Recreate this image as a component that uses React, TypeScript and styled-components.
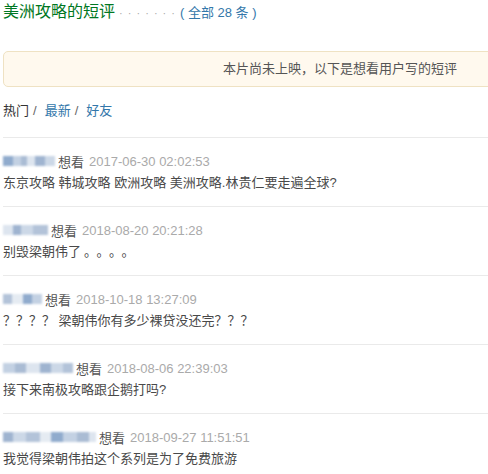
import React from "react";
import styled, { createGlobalStyle } from "styled-components";

const GlobalStyle = createGlobalStyle`
  body {
    margin: 0;
    background: #fff;
    overflow: hidden;
    font-family: "Liberation Sans", "Noto Sans CJK SC", sans-serif;
  }
`;

const Punct = styled.span`
  letter-spacing: 6px;
  margin-left: 3px;
`;

interface Comment {
  name: number[];
  time: string;
  text: React.ReactNode;
}

// widths of the blurred username patches
const comments: Comment[] = [
  { name: [10, 8, 6, 8, 10, 10], time: "2017-06-30 02:02:53", text: "东京攻略 韩城攻略 欧洲攻略 美洲攻略.林贵仁要走遍全球?" },
  { name: [10, 8, 12, 15], time: "2018-08-20 20:21:28", text: <>别毁梁朝伟了<Punct>。。。。</Punct></> },
  { name: [9, 11, 9, 10], time: "2018-10-18 13:27:09", text: "？？？？ 梁朝伟你有多少裸贷没还完？？？" },
  { name: [12, 11, 14, 11, 12, 10], time: "2018-08-06 22:39:03", text: "接下来南极攻略跟企鹅打吗?" },
  { name: [10, 13, 14, 11, 12, 14, 12, 7], time: "2018-09-27 11:51:51", text: "我觉得梁朝伟拍这个系列是为了免费旅游" },
];

const patchColors = ["#7d9cc4", "#b9c9de", "#9bb0cc", "#d7e0ec", "#8ea7c8", "#c3d1e3", "#a6b8d2", "#e1e7f0"];

export default function App(): React.ReactElement {
  return (
    <>
      <GlobalStyle />
      <Page>
        <Title>
          美洲攻略的短评
          <Dots>· · · · · · ·</Dots>
          <Count>( 全部 28 条 )</Count>
        </Title>
        <Notice>本片尚未上映，以下是想看用户写的短评</Notice>
        <Tabs>
          <Tab>热门</Tab>
          <Slash>/</Slash>
          <Tab $link>最新</Tab>
          <Slash>/</Slash>
          <Tab $link>好友</Tab>
        </Tabs>
        <List>
          {comments.map((c, i) => (
            <Item key={i}>
              <Header>
                <BlurName>
                  {c.name.map((w, j) => (
                    <Patch key={j} style={{ width: w, background: patchColors[(i * 3 + j) % patchColors.length] }} />
                  ))}
                </BlurName>
                <Status>想看</Status>
                <Time>{c.time}</Time>
              </Header>
              <Text>{c.text}</Text>
            </Item>
          ))}
        </List>
      </Page>
    </>
  );
}

const Page = styled.div`
  padding: 0 0 0 3px;
  width: 485px;
`;

const Title = styled.h2`
  margin: 0;
  font-size: 16px;
  font-weight: normal;
  line-height: 24px;
  color: #072;
  white-space: nowrap;
`;

const Dots = styled.span`
  color: #aaa;
  font-size: 11px;
  margin: 0 4px 0 4px;
  letter-spacing: 1px;
`;

const Count = styled.span`
  color: #37a;
  font-size: 13px;
`;

const Notice = styled.div`
  margin-top: 26px;
  width: 672px;
  height: 34px;
  line-height: 34px;
  background: #fff9ee;
  border: 1px solid #efe2c3;
  border-radius: 5px;
  text-align: center;
  font-size: 13px;
  color: #555;
`;

const Tabs = styled.div`
  margin-top: 14px;
  display: flex;
  align-items: center;
  line-height: 20px;
  font-size: 13px;
  padding-bottom: 16px;
  border-bottom: 1px solid #eaeaea;
`;

const Tab = styled.span<{ $link?: boolean }>`
  color: ${(p) => (p.$link ? "#37a" : "#333")};
`;

const Slash = styled.span`
  color: #666;
  margin: 0 8px 0 4px;
`;

const List = styled.div``;

const Item = styled.div`
  padding: 13px 0 13px;
  border-bottom: 1px solid #eaeaea;
`;

const Header = styled.div`
  display: flex;
  align-items: center;
  height: 20px;
  font-size: 13px;
`;

const BlurName = styled.span`
  display: flex;
  align-items: center;
  height: 12px;
  margin-right: 3px;
  filter: blur(1px);
`;

const Patch = styled.span`
  display: block;
  height: 10px;
  opacity: 0.85;
`;

const Status = styled.span`
  color: #555;
  margin-right: 5px;
`;

const Time = styled.span`
  color: #aaa;
`;

const Text = styled.p`
  margin: 2px 0 0;
  line-height: 20px;
  font-size: 13px;
  color: #494949;
  white-space: nowrap;
`;
